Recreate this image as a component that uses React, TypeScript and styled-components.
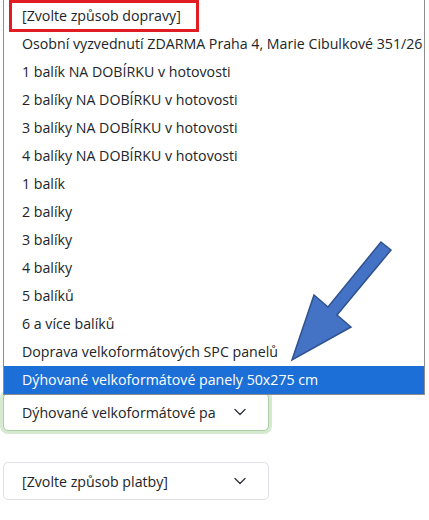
import React from 'react'
import styled, { createGlobalStyle } from 'styled-components'

const GlobalStyle = createGlobalStyle`
  html, body {
    margin: 0;
    padding: 0;
    background: #ffffff;
  }
  body {
    font-family: 'Open Sans', 'Noto Sans', Arial, sans-serif;
    color: #212529;
  }
`

const Page = styled.div`
  position: relative;
  width: 429px;
  height: 520px;
  overflow: hidden;
  display: flex;
  flex-direction: column;
`

const ListBox = styled.ul`
  position: relative;
  z-index: 2;
  list-style: none;
  margin: 0 0 0 3px;
  padding: 2px 0 0;
  width: 420px;
  background: #ffffff;
  border-left: 1px solid #8c8c8c;
  border-right: 1px solid #8c8c8c;
  border-bottom: 1px solid #8c8c8c;
`

const Option = styled.li<{ $active?: boolean }>`
  position: relative;
  height: 28px;
  line-height: 28px;
  padding-left: 18px;
  font-size: 14.2px;
  white-space: nowrap;
  color: ${({ $active }) => ($active ? '#ffffff' : '#212529')};
  background: ${({ $active }) => ($active ? '#1c6fd6' : 'transparent')};
`

const Marked = styled.span`
  position: absolute;
  left: 5px;
  top: -2px;
  width: 190px;
  height: 32px;
  border: 3px solid #e31b23;
  box-sizing: border-box;
  pointer-events: none;
`

const SelectBox = styled.div<{ $focused?: boolean }>`
  position: relative;
  z-index: 1;
  display: flex;
  align-items: center;
  justify-content: space-between;
  box-sizing: border-box;
  margin-left: 3px;
  width: 266px;
  height: 38px;
  padding: 0 22px 0 18px;
  font-size: 14.2px;
  background: #ffffff;
  border: 1px solid ${({ $focused }) => ($focused ? '#a9cfa2' : '#dee2e6')};
  border-radius: 5px;
  box-shadow: ${({ $focused }) => ($focused ? '0 0 0 3px #d6ead2' : 'none')};
`

const FocusedSelect = styled(SelectBox)`
  margin-top: -2px;
`

const PlainSelect = styled(SelectBox)`
  margin-top: 31px;
`

const Chevron = () => (
  <svg width="12" height="8" viewBox="0 0 12 8" fill="none">
    <path d="M1 1.5 L6 6.5 L11 1.5" stroke="#343a40" strokeWidth="1.4" strokeLinecap="round" strokeLinejoin="round" />
  </svg>
)

const ArrowLayer = styled.svg`
  position: absolute;
  left: 0;
  top: 0;
  z-index: 5;
  pointer-events: none;
`

const options = [
  '[Zvolte způsob dopravy]',
  'Osobní vyzvednutí ZDARMA Praha 4, Marie Cibulkové 351/26',
  '1 balík NA DOBÍRKU v hotovosti',
  '2 balíky NA DOBÍRKU v hotovosti',
  '3 balíky NA DOBÍRKU v hotovosti',
  '4 balíky NA DOBÍRKU v hotovosti',
  '1 balík',
  '2 balíky',
  '3 balíky',
  '4 balíky',
  '5 balíků',
  '6 a více balíků',
  'Doprava velkoformátových SPC panelů',
  'Dýhované velkoformátové panely 50x275 cm',
]

const App = () => {
  const activeIndex = options.length - 1

  return (
    <Page>
      <GlobalStyle />
      <ListBox>
        {options.map((label, i) => (
          <Option key={label} $active={i === activeIndex}>
            {i === 0 && <Marked />}
            {label}
          </Option>
        ))}
      </ListBox>

      <FocusedSelect $focused>
        <span>Dýhované velkoformátové pa</span>
        <Chevron />
      </FocusedSelect>

      <PlainSelect>
        <span>[Zvolte způsob platby]</span>
        <Chevron />
      </PlainSelect>

      <ArrowLayer width="429" height="520" viewBox="0 0 429 520">
        <polygon
          points="381,242 391,250 337,315 351,327 292,360 314,295 328,307"
          fill="#4472c4"
          stroke="#2f528f"
          strokeWidth="1.5"
          strokeLinejoin="miter"
        />
      </ArrowLayer>
    </Page>
  )
}

export default App
